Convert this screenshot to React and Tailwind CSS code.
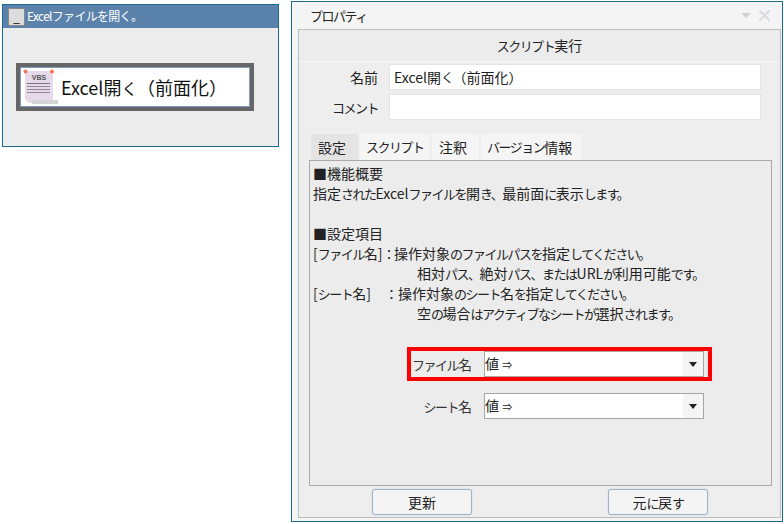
const jp = { fontFamily: '"Noto Sans CJK JP", "Noto Sans", sans-serif' };

// Kana and small punctuation run narrower than kanji in the reference's UI font.
function T({ children }) {
  return String(children)
    .split(/([\u3040-\u30ff。、：]+)/)
    .map((part, i) =>
      i % 2 ? (
        <span key={i} className="text-[13px] tracking-[-1.5px]">{part}</span>
      ) : (
        <span key={i}>{part}</span>
      )
    );
}

function VbsIcon() {
  return (
    <svg width="36" height="36" viewBox="0 0 36 36" className="shrink-0">
      <path d="M2 2H30V30L26 34H6L2 30Z" fill="#e6d9ea" />
      <rect x="9" y="31" width="26" height="4" fill="#d4d4d4" />
      <circle cx="2.5" cy="2.5" r="2" fill="#f6745c" />
      <circle cx="29" cy="2.5" r="2" fill="#f6745c" />
      <text x="16" y="11" textAnchor="middle" fontSize="7" fontWeight="700" fontFamily="Liberation Sans" fill="#555">VBS</text>
      <rect x="4" y="14" width="23" height="1" fill="#77727f" />
      <rect x="4" y="17" width="23" height="1" fill="#8d8894" />
      <rect x="4" y="20" width="23" height="1" fill="#8d8894" />
      <rect x="4" y="23" width="23" height="1" fill="#8d8894" />
    </svg>
  );
}

function SelectBox({ className = "" }) {
  return (
    <div className={`flex h-[26px] w-[220px] shrink-0 items-stretch border border-[#a6a6a6] bg-white ${className}`}>
      <span className="flex-1 whitespace-nowrap text-[14px] leading-[23px] text-[#222]">値 <span className="text-[10px]">⇒</span></span>
      <span className="flex w-[20px] items-center justify-center bg-[#f4f4f4]">
        <svg width="8" height="5" viewBox="0 0 8 5"><path d="M0 0H8L4 5Z" fill="#222" /></svg>
      </span>
    </div>
  );
}

function Tab({ label, active, w }) {
  return (
    <div className={`flex h-[26px] items-center whitespace-nowrap text-[14px] text-[#222] ${w} ${active ? "bg-[#e4e4e4]" : "bg-[#f5f5f5]"}`}>
      <T>{label}</T>
    </div>
  );
}

function DescLine({ children, indent }) {
  return <div className={`h-[20px] whitespace-pre leading-[20px] ${indent ? "pl-[104px]" : ""}`}><T>{children}</T></div>;
}

function PrefixLine({ prefix, w, children }) {
  return (
    <div className="flex h-[20px] whitespace-pre leading-[20px]">
      <span className={w}><T>{prefix}</T></span>
      <span><T>{children}</T></span>
    </div>
  );
}

export default function App() {
  return (
    <div className="flex h-[524px] w-[784px] items-start bg-white pl-[2px] pt-[1px]" style={jp}>
      <div className="mt-[3px] h-[143px] w-[277px] shrink-0 border border-[#1c6a8c] bg-[#ececec]">
        <div className="flex h-[23px] items-center bg-[#5a82aa] pl-[5px]">
          <div className="mr-[2px] flex h-[18px] w-[17px] items-center justify-center border border-[#888] bg-[#dcdcdc] pt-[3px] text-[11px] leading-[12px] text-black" style={{ fontFamily: '"Liberation Sans", sans-serif' }}>_</div>
          <span className="pb-[2px] text-[12px] tracking-[-0.7px] text-white">Excelファイルを開く。</span>
        </div>
        <div className="ml-[13px] mt-[35px] flex h-[48px] w-[238px] items-center border-[4px] border-[#666] bg-white pl-[3px] shadow-[inset_0_0_0_1px_#7f9cc0]">
          <VbsIcon />
          <span className="ml-[2px] whitespace-nowrap text-[18px] text-[#111]">Excel開<span className="text-[16px] tracking-[-0.5px]">く</span>（前面化）</span>
        </div>
      </div>

      <div className="ml-[12px] flex h-[521px] w-[492px] shrink-0 flex-col border border-[#1c6a8c] bg-[#f4f4f4] pb-[3px] pl-[6px] pr-[1px]">
        <div className="flex h-[27px] shrink-0 items-center justify-between pb-[1px] pl-[12px] pr-[11px]">
          <span className="text-[14px] text-[#222]"><T>プロパティ</T></span>
          <div className="flex items-center gap-[8px]">
            <svg width="10" height="5" viewBox="0 0 10 5"><path d="M0 0H10L5 5Z" fill="#cfd3da" /></svg>
            <svg width="11" height="11" viewBox="0 0 11 11"><path d="M0.5 0.5L10.5 10.5M10.5 0.5L0.5 10.5" stroke="#d4d7dc" strokeWidth="1.6" /></svg>
          </div>
        </div>

        <div className="flex min-h-0 flex-1 flex-col border border-[#bdbdbd] bg-[#eeeeee]">
          <div className="flex h-[32px] shrink-0 items-center justify-center border-b border-[#f6f6f6] bg-[#ececec] text-[14px] text-[#222]">
            <T>スクリプト実行</T>
          </div>

          <div className="mt-[2px] flex h-[26px] shrink-0 items-center">
            <span className="w-[79px] text-right text-[14px] text-[#222]">名前</span>
            <div className="ml-[11px] flex h-[26px] w-[372px] items-center whitespace-nowrap border border-[#e4e4e4] bg-white pl-[4px] text-[14px] text-[#222]">
              <T>Excel開く（前面化）</T>
            </div>
          </div>
          <div className="mt-[4px] flex h-[26px] shrink-0 items-center">
            <span className="w-[79px] text-right text-[14px] text-[#222]"><T>コメント</T></span>
            <div className="ml-[11px] h-[26px] w-[372px] border border-[#e4e4e4] bg-white" />
          </div>

          <div className="ml-[12px] mt-[14px] flex h-[26px] shrink-0 gap-[2px]">
            <Tab label="設定" active w="w-[47px] pl-[7px]" />
            <Tab label="スクリプト" w="w-[70px] pl-[6px]" />
            <Tab label="注釈" w="w-[47px] pl-[7px]" />
            <Tab label="バージョン情報" w="w-[101px] pl-[6px]" />
          </div>

          <div className="ml-[10px] flex h-[326px] w-[463px] shrink-0 flex-col border border-[#a9a9a9] bg-[#ececec] pl-[3px] pt-[2px] text-[14px] text-[#222]">
            <DescLine>■機能概要</DescLine>
            <DescLine>指定されたExcelファイルを開き、最前面に表示します。</DescLine>
            <DescLine> </DescLine>
            <DescLine>■設定項目</DescLine>
            <PrefixLine prefix="[ファイル名]：" w="w-[81px]">操作対象のファイルパスを指定してください。</PrefixLine>
            <DescLine indent>相対パス、絶対パス、またはURLが利用可能です。</DescLine>
            <PrefixLine prefix="[シート名]　：" w="w-[85px]">操作対象のシート名を指定してください。</PrefixLine>
            <DescLine indent>空の場合はアクティブなシートが選択されます。</DescLine>

            <div className="ml-[94px] mt-[24px] flex h-[34px] w-[305px] items-center border-[4px] border-[#ff0000]">
              <span className="w-[61px] whitespace-nowrap text-right text-[14px] text-[#333]"><T>ファイル名</T></span>
              <SelectBox className="ml-[12px]" />
            </div>
            <div className="ml-[98px] mt-[12px] flex h-[26px] items-center">
              <span className="w-[61px] whitespace-nowrap text-right text-[14px] text-[#333]"><T>シート名</T></span>
              <SelectBox className="ml-[12px]" />
            </div>
          </div>

          <div className="ml-[73px] mt-[3px] flex shrink-0 gap-[136px]">
            <button className="h-[26px] w-[100px] rounded-[3px] border border-[#9fb2c4] bg-[#f4f4f4] text-[14px] text-[#222] shadow-[0_0_2px_#bcd3ea]">更新</button>
            <button className="h-[26px] w-[100px] rounded-[3px] border border-[#9fb2c4] bg-[#f4f4f4] text-[14px] text-[#222] shadow-[0_0_2px_#bcd3ea]"><T>元に戻す</T></button>
          </div>
        </div>
      </div>
    </div>
  );
}
